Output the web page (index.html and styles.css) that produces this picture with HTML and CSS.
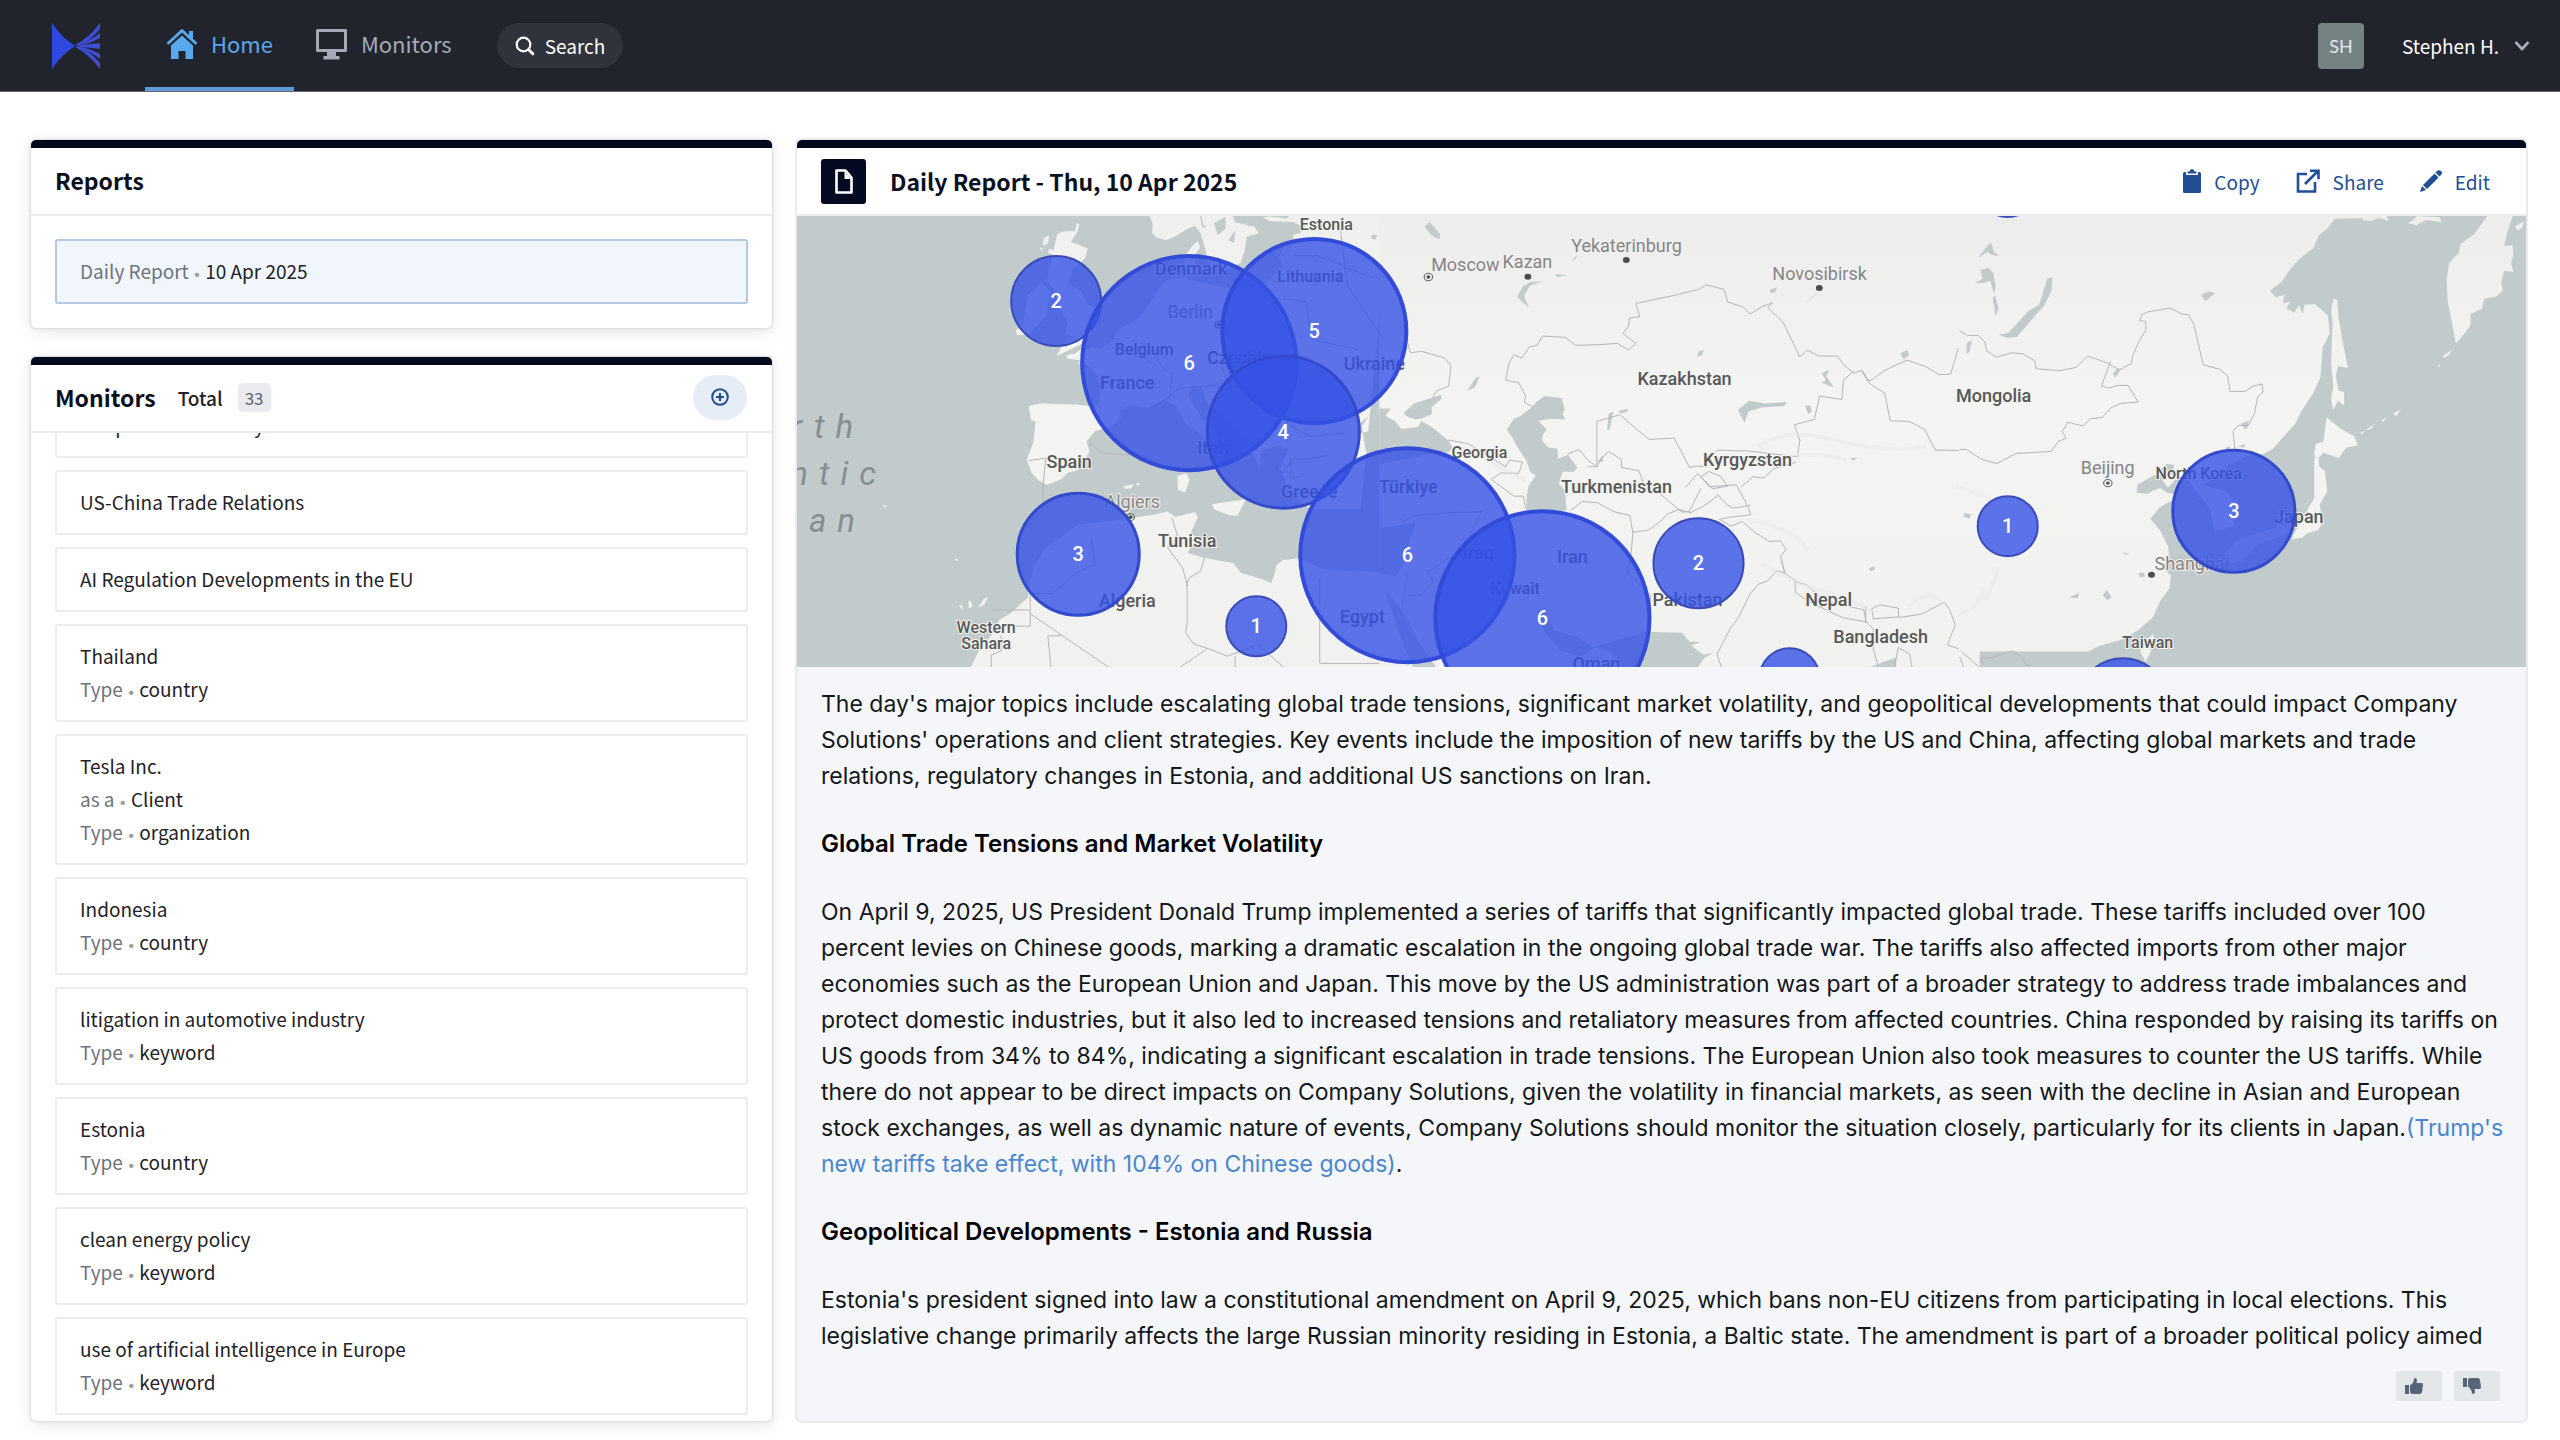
FILE: index.html
```html
<!DOCTYPE html>
<html lang="en">
<head>
<meta charset="utf-8">
<meta name="viewport" content="width=device-width, initial-scale=1">
<title>Daily Report - Thu, 10 Apr 2025</title>
<link rel="stylesheet" href="styles.css">
</head>
<body class="page">
<header class="topbar">
  <a class="logo" href="#" aria-label="Home page">
    <svg width="50" height="46" viewBox="0 0 50 46"><path fill="#2f49e3" d="M1 0Q10 14 24 23Q10 32 1 46z"/><g fill="#3d4fd8"><path d="M24 22Q38 15 49 0v6Q38 19 27 22.500z"/><path d="M27 22.500Q40 17 49 10v5Q38 21 28 22.500z"/><path d="M27 22.500L49 20v6L27 23.500z"/><path d="M28 23.500Q38 25 49 31v5Q40 29 27 23.500z"/><path d="M27 23.500Q38 27 49 40v6Q38 31 24 24z"/></g></svg>
  </a>
  <nav class="nav">
    <a class="tab tab-active" href="#"><svg width="30" height="32" viewBox="0 0 30 32"><path fill="none" stroke="currentColor" stroke-width="3" stroke-linecap="round" stroke-linejoin="round" d="M1.500 15L15 2.500 28.500 15"/><path fill="currentColor" d="M22 3h4v9l-4-4zM15 7.500L26 17.500V31h-7.500v-8h-7v8H4V17.500z"/></svg>Home</a>
    <a class="tab" href="#"><svg width="31" height="32" viewBox="0 0 31 32"><path fill="none" stroke="currentColor" stroke-width="3" stroke-linejoin="round" d="M1.500 2.500h28v20h-28z"/><path fill="currentColor" d="M11 23h9v5h3.500v3.500h-16V28H11z"/></svg>Monitors</a>
  </nav>
  <button class="search" type="button"><svg width="20" height="20" viewBox="0 0 20 20"><circle cx="8.500" cy="8.500" r="6.800" fill="none" stroke="currentColor" stroke-width="2.200"/><path stroke="currentColor" stroke-width="3" stroke-linecap="round" d="M14 14l3.800 3.800"/></svg>Search</button>
  <span class="avatar">SH</span>
  <button class="user" type="button">Stephen H.<svg width="16" height="12" viewBox="0 0 16 12"><path fill="none" stroke="#a9aebb" stroke-width="2.600" d="M1.500 2L8 9l6.500-7"/></svg></button>
</header>
<main class="layout">
  <div class="side">
    <section class="card">
      <div class="card-head"><h2 class="card-title">Reports</h2></div>
      <div class="reports"><a class="item item-selected" href="#"><span class="line"><span class="key">Daily Report</span> <span class="dot">•</span> 10 Apr 2025</span></a></div>
    </section>
    <section class="card monitors">
      <div class="card-head"><h2 class="card-title">Monitors</h2><span class="total">Total</span><span class="badge">33</span>
        <button class="add" type="button" aria-label="Add monitor"><svg width="20" height="20" viewBox="0 0 20 20"><circle cx="10" cy="10" r="7.800" fill="none" stroke="currentColor" stroke-width="2"/><path stroke="currentColor" stroke-width="2.200" d="M10 6v8M6 10h8"/></svg></button></div>
      <div class="list">
        <a class="item" href="#"><span class="line">Geopolitical Stability in Rwanda</span></a>
        <a class="item" href="#"><span class="line">US-China Trade Relations</span></a>
        <a class="item" href="#"><span class="line">AI Regulation Developments in the EU</span></a>
        <a class="item" href="#"><span class="line">Thailand</span><span class="line"><span class="key">Type</span> <span class="dot">•</span> country</span></a>
        <a class="item" href="#"><span class="line">Tesla Inc.</span><span class="line"><span class="key">as a</span> <span class="dot">•</span> Client</span><span class="line"><span class="key">Type</span> <span class="dot">•</span> organization</span></a>
        <a class="item" href="#"><span class="line">Indonesia</span><span class="line"><span class="key">Type</span> <span class="dot">•</span> country</span></a>
        <a class="item" href="#"><span class="line">litigation in automotive industry</span><span class="line"><span class="key">Type</span> <span class="dot">•</span> keyword</span></a>
        <a class="item" href="#"><span class="line">Estonia</span><span class="line"><span class="key">Type</span> <span class="dot">•</span> country</span></a>
        <a class="item" href="#"><span class="line">clean energy policy</span><span class="line"><span class="key">Type</span> <span class="dot">•</span> keyword</span></a>
        <a class="item" href="#"><span class="line">use of artificial intelligence in Europe</span><span class="line"><span class="key">Type</span> <span class="dot">•</span> keyword</span></a>
      </div>
    </section>
  </div>
  <section class="card report">
    <div class="card-head report-head">
      <span class="doc"><svg width="18" height="25" viewBox="0 0 18 25"><path fill="none" stroke="#fff" stroke-width="2.600" stroke-linejoin="round" d="M1.500 1.500h9l6 7v15h-15z"/><path fill="#fff" d="M9.500 2v8H16z"/></svg></span>
      <h1 class="card-title">Daily Report - Thu, 10 Apr 2025</h1>
      <div class="actions">
        <button class="action" type="button"><svg width="18" height="24" viewBox="0 0 18 24"><path fill="currentColor" d="M0 4.500Q0 3 1.500 3H3v3h12V3h1.500Q18 3 18 4.500v18Q18 24 16.500 24h-15Q0 24 0 22.500zM4.500 4.500V2.500H6.500Q7 0 9 0t2.500 2.500h2v2z"/></svg>Copy</button>
        <button class="action" type="button"><svg width="24" height="24" viewBox="0 0 24 24"><path fill="none" stroke="currentColor" stroke-width="2.600" d="M11 5H2v17.500h17V13M9 15L21 3M14 1.800h8.500v8.500"/></svg>Share</button>
        <button class="action" type="button"><svg width="22" height="22" viewBox="0 0 22 22"><path fill="currentColor" d="M0 22l2-6 4 4zM3 15L14.500 3.500l4 4L7 19zM15.500 2.500L17 1q2-1.500 4 0t0 4l-1.500 1.500z"/></svg>Edit</button>
      </div>
    </div>
    <svg class="map" viewBox="798 216 1728 451" role="img" aria-label="Map of events by country">
      <defs><linearGradient id="land" gradientUnits="userSpaceOnUse" x1="0" y1="48" x2="0" y2="1500"><stop offset="0" stop-color="#ededed"/><stop offset=".4" stop-color="#f4f4f2"/><stop offset="1" stop-color="#f1f1f0"/></linearGradient></defs>
      <rect x="798" y="216" width="1728" height="451" fill="#c2cbcc"/>
      <!-- Europe and North Africa -->
      <g class="tile" transform="translate(790 130) scale(.3827 .3444)">
        <g fill="url(#land)">
          <path d="M941 245l9 30-2 25 12 12 25 8 25-12 25-18 25-12 15 22 10 38 10 48 25 20 38-6 22-15 10-35 5-40 32-10-12-20-50-12-8-23z"/>
          <path d="M1568 245H1310l-10 12-48-6-14 4 20 10 60 2 22 14-4 18-20 6 4 20-28 14-12 30 8 28-18 22-30 26-60 16-54-6-44-12-44-10-8-30 2-34 24-36 12-10 6 18-16 24 6 40-28 22-52 8-30 46-38 62-24 20-30 14-18 36-34 22-18-4-8 6-18-3-18 14-24 6 4 10 34 4-8 10 26 4 26 32 8 38-4 42-16 8-44-5-60-2-30-2-34 9 6 40 12 4-6 60-17 50 12 38 18 22 22 14 38-16 18-20 24-6 32-54-8-30 22-30 44-14 24-26-4-18 26-16 48 6 40-22 34 16 24 52 40 30 34 44 22 40 4-30-14-60-44-40-34-64 10-32 24 6 14 46 46 50 48 46 20 38 22 50 12 22-10-22 6-46 42-14 28 12-14 30-8 24 14 40 20 42 44 36h132z"/>
          <path d="M1568 1285l-168-10-70-32-40 6-18 14-2 18-10 34-20-10-60-20-20-28-75-15-45-15 25-38-15-22 18-44-8-14-52 14-20-16-30 8-80 14-80 10-44 6-40 34-40 30-36 56-14 92-46 46-28 18-22 46-28 36-20 44-22 52h1130z"/>
          <path d="M700 303l14-8 40-2-18 32 44 18-6 28-14 16-20 18-10 40 36 26 12 34 26 10-2 34-20 26 6 14-28 34-62 34 20-40 34-16-30-6 6-34-10-20-16-30-8-44-20-30z"/>
          <path d="M624 480l36-38 22 26-8 70-46 54-32 4-4-14 20-20z"/>
          <path d="M665 315l14-10-2 22-14 10zM752 270l6 4-4 20-8 4zM656 340l6 4-2 10zM680 345l12 4-4 12-12-4zM1014 1004l24-8 8 20-12 36-18-8zM1105 1086l88-14-22 48-22-2-40-18zM874 1034l26-6-6 12-16 2zM905 1024l12 2-4 8zM243 1088l14 4-6 4zM444 1378l8 2 2 12-6-4zM468 1368l8 0 2 16-8 4zM498 1380l10-18 12-8-8 20-14 12zM434 1243l8 4-6 4z"/>
        </g>
        <path class="water" d="M1490 850q30-20 78-80v90l-76 20zM1110 270l30-18v34l-20 20zM1148 320l18-32-4 40zM1522 304l14 0-4 14-12-2zM1568 810l-48 10-24 40 10 70 62-10zM1180 250l20 30 30-22z"/>
        <path class="border" d="M626 960l45-8-8 80 2 44M785 910l36 28 70 6M1075 250l6 30 8 0M1320 365l60 0 70 30 10 60 90 150M1290 490l60 8 16 110 120 30M1440 290l12 110 80 30 36-10M935 620l40 70 26 20-6 60-20 40M960 800l60-50 100-10 30-36M900 640l50 40M1130 690l20 50 120 30 30 80 60 40 90-10M1000 1125l18 66M1018 1191l-30 20 40 60 12 50 0 110-4 28 20 32 38 14 50 22 50-20 30-14 68 66M1085 1240l-10 40-30 20-8 24M630 1345h60l60-60 50-24-12-80M630 1345v95h-40M530 1393h100M630 1404l206 156M710 1468h-34l8 92M554 1466v46l-26 12v36M1020 1560l72-54M1165 1526v34M1386 1300v248h180M1300 925l-30 60 20 10 26-40 40 0 50-10M1310 950l0 60 22-4"/>
        <circle class="ring" cx="892" cy="1124" r="10"/><circle class="pin" cx="892" cy="1124" r="5"/>
        <circle class="ring" cx="1122" cy="565" r="10"/><circle class="pin" cx="1122" cy="565" r="5"/>
      </g>
      <!-- Central Asia -->
      <g class="tile" transform="translate(1380 200) scale(.3827 .3333)">
        <path fill="url(#land)" d="M0 40H1568V1410H0z"/>
        <g class="water">
          <path d="M0 625l30 0-14 22 24 16 18 24 42-6 10-18 30 20 40 38 12 22-12 14-30 0-150 36z"/>
          <path d="M64 638l26-28 72-26 0 12-26 26 2 20-30 14-14 2-24-10z"/>
          <path d="M400 620l10-14 22-18 44 6 8 34-6 14 8 16-36-2-35 6 22 26-10 16-2 18 16 20 24 4 2 30 26-12 24 38-10 14-28-2-10 36 16 22 4 60H384l0-36 6-40 18-28-14-14-10-32-22-38-14-30-15-26 18-32 18-8z"/>
          <path d="M700 1295l90 3 20 26 30 2-26 10 32 28 26-6-24 16-18 30H640l-40-52-40-10-30 28-60-20-40-60-20-60 20 10 30 52 60 20 34 30z"/>
          <path d="M15 1170l45 60 40 90 50 85H90l-30-80zM0 985l95-18-12 40-22 90-18 32-43-10z"/>
          <path d="M936 630l30-28 40 8 58-4-6 12-60 4-34 12-10 34zM118 80l14-14 26 36 0 16-22-12zM360 290l14-30 20-14 32-2-34 14-14 30 12 34-20-20zM230 572l20-36 12-8-12 34zM595 690l4-50 12-6-10 56zM626 632l24-6-4 10-18 4zM1155 520l20-12-8 20 20 34-32-14 12-8zM830 470l4-16 14-4-6 16zM1020 270l18-8-4 14-12 4zM1112 618l14-2 2 20-8 6zM1360 460l18-10 6 14-14 14zM1540 420l12-6-4 40-8-10zM1528 940l20 6-6 14-14-6zM1278 1104l14-6 2 10-10 6zM570 785l14-20 0 20zM1230 774l18 0-10 8zM460 222l30 4-26 6zM500 186l16-20-4 12zM1280 1402l30-14 40-16v30zM1114 308l34-32-22 18z"/>
        </g>
        <path class="border" d="M75 430l6 28 30-4 60 20 16 24-6 60-30 14-12 20M400 620l-22-14 4-18-18-40-34-8 8-50 14-26 20 10 20-34 20-4 14-28 60 4 26 24 60-2 50-4 28 20 20-20-34-30 14-20 4-26 26-4-10-40 100-24 64-18 20-14 46 14 10 38 42 16 16 20 34-24 26-10-14 14 40 44 44 104 20-20 30 18 48 0 20 30 24 22 20-10 18 32 10-4 30-26 60-32 50 20 34 24 30-2 20-78 60 20M1240 512l-28 28-4 58-58-10-14 70-52 16 14 46-6 50-30-4-104-14-30 0-44-2-20 20-10 30-24-2-20 4-40-88-66 4-76-74-60 20v136l-24-20-22-32-30 14M544 800l24 0 10-20 20-26 34 24 0 24 46 10 14 44 40 24 58 56 0 0 20-2 30-70M500 930l30-26 40 4 40 26 44 12 8 50-4 60-10 60 60 70 0 60M662 996l40-6 30-24 20-24 30-14 30 10 34-20 30-24 8-10 24 30 16 10 46-8M800 862l14-20 18-22 30 40 70-6 10 20 22 50 6 20-60 8-22 6 30 20 30-14 30 30 40 30 30-2 14 26-14 20 10 50-20-6-24 30-24 10-22 30-30 70-20 30-36 80 20 70-44 12M840 830l20-16 30 14 20 30-40 8zM945 860l30-30 30 4 24-28 60-20M1085 1145l30 8 50 50 100 26 6 36-60-12-74-40-30-20-20-16zM1050 1080l10 40 30 25M1260 514l20 36 40 30 14 82 50 2 40 24 28 62 116 2M1270 1218v50M1270 1262l20 24 0 60 12 50M1286 1226l20-12 50 10 0 26-66 6zM1356 1252l60-10 60-36 14 24 14 44-20 60 28 12 60 60M1345 1402l10-60 30 20 6 40M180 720l50 10 60 40 40 30 10-20 34 6-10 34-46-2-26 20 60 50 24 0 6 36M60 1210l14-90M74 1185l36 0 30-40-14-30 80-60 40-70 20-50-80 2-90 10-40 20"/>
        <g class="relief"><path d="M990 740q60-60 200-20t240 20M1000 800q100-60 220-20M960 960q120 20 160 90M1000 1090q80 60 150 80t150 70M1380 1220q60-60 90-10M240 740q60 60 140 100"/></g>
        <circle class="ring" cx="128" cy="231" r="11"/><circle class="pin" cx="128" cy="231" r="5"/><circle class="pin" cx="388" cy="230" r="9"/><circle class="pin" cx="645" cy="180" r="9"/><circle class="pin" cx="1149" cy="264" r="9"/>
      </g>
      <!-- East Asia and Pacific -->
      <g class="tile" transform="translate(1960 200) scale(.3827 .3333)">
        <g fill="url(#land)">
          <path d="M-2 40H1066l-8 14-78 2-20 30-22 20-14 38-34 30-26 32-24 40-30 26 16 20 22-8-4 26 20-4-12 18 22 14 12-22 10 24 4-26 28-2 34 34 4 54-18 42-6 90-20 50-30 52-14 34-26 34-36 46-24 14-40 4-50 30-44 44-22 14 60 20 30 46-10 56-50 20-12-70-32-48-20-32-30-18-28 34-14-20 26-20 4-28-20-2-30 32-46 30-2 24 28 4 14-10 20-8 18 14 24 6-4 12-40 26-24 34 26 36 20 46 4 36-20 28 24 24-4 38-24 38-20 50-40 40-40 26-62 20-26 16H-2z"/>
          <path d="M976 296l10 4 4 54 10 70 14 80-26-6-6 30 8 44 14 4 0 40-16-14-12 26-6-30 6-40-6-70 4-120-4-34zM958 652l40 36 32 20 10 28-30 6-20 32-40-16-18 22-6-20 4-28 20-8zM926 778l8-14 4 14 0 20 16 16 6 60-20 40 10 50-14 26-30 10-10 12-30 6 20-44 20-40 20-40 0-44zM1378 48h66l-14 50-8 40 22-2 2 30-6 24 6 26-24-4-8 34 4 26-18 18-30 6-6 30-30 16 0 34-20 30-18 24-10-60-12-70-2-60 6-50 26-32 4-26 36-30zM1050 48h66l4 14-26-8-20 10-20-4zM1170 70l14-10 10-12 60 4 4 14-40-6-24 16zM1450 80l24-16-4 16-12 12zM474 1330l34-30-8 50-14 36-14-30zM1262 468l24-20-10 18-12 8zM1132 640l20-12-12 20zM1060 690l26-20-14 18zM1100 662l18-12-12 14zM1044 700l14-8-6 10zM1180 596l10-2zM1250 496l4-6-2 14z"/>
          <path opacity=".8" d="M690 1060l40-44 60-20 50-24 30 4-30 34-60 20-40 50-30 10z"/>
        </g>
        <path class="water" d="M228 236l14-4-2 40-20 46-24 30-46 62-26 4-22-10 26-6 50-64 30-20zM630 286l20-12 18 6-14 12-12 12zM400 520l14-16 4 10-12 18zM735 670l20-8-2 18-8 8zM18 430l14-10-6 34-8 8zM48 174l24-36 10-12 6 26 14 16-20-4-10-8zM40 250l20-14-6-26 20-6 14 14 6 44-4 20-10-40-16 6zM86 294l6-8 10 38-8 24zM10 938l20 4-4 14-14-6zM374 1186l10-18 12 24-10 8zM424 1056l18 4-8 4zM286 1192l26-14-4 16zM466 1120l14-4 4 12-12 4zM690 745l16-8 0 12zM725 740l20-8 0 10z"/>
        <path class="border" d="M0 392l20 14 28 0 18 20 4 26 26 20 40-14 30 4 30 20 4 24 60 6 44-10 30-34 50 20 34 22 30-20 6-30 16-40 16-30 0-26-16-2 6-18 14-8 60-12 30 18 18 2 14 30 14 70 10 50 44 14 20 20 6 46 40 0 20-16 24-6 2 24-14 14-8 50-16 36-26 0-14 18 6 66M394 484l-24 74 20 6 22-8 28 0 26 50-46 4-26 14-22 28-30 4-20 22-40-12-14 28 10 20-20 10-20 30-90 6-50 30-40-12-40-30H0M0 1370l10 30M60 1390l-6-14 30-4 30-12 24-8 24 18 10 22 20 10M600 915l30-14"/>
        <g class="relief"><path d="M-10 860q80 20 100 60M100 1100q-10 60-40 100M0 1240q60-20 60-80"/></g>
        <circle class="ring" cx="387" cy="849" r="11"/><circle class="pin" cx="387" cy="849" r="5"/><circle class="pin" cx="501" cy="1124" r="9"/>
      </g>
      <g class="ocean"><text x="865" y="438">North</text><text x="888" y="485">Atlantic</text><text x="867" y="532">Ocean</text></g>
      <g class="country">
        <text x="1192" y="275">Denmark</text><text x="1128" y="389">France</text><text x="1070" y="468">Spain</text><text x="1188" y="547">Tunisia</text><text x="1128" y="607">Algeria</text><text x="1375" y="370">Ukraine</text><text x="1215" y="454">Italy</text><text x="1310" y="498">Greece</text><text x="1363" y="623">Egypt</text><text x="1409" y="493">Türkiye</text><text x="1685" y="385">Kazakhstan</text><text x="1748" y="466">Kyrgyzstan</text><text x="1617" y="493">Turkmenistan</text><text x="1573" y="563">Iran</text><text x="1479" y="559">Iraq</text><text x="1688" y="606">Pakistan</text><text x="1829" y="606">Nepal</text><text x="1881" y="643">Bangladesh</text><text x="1597" y="670">Oman</text><text x="1994" y="402">Mongolia</text><text x="2299" y="523">Japan</text><text x="1240" y="364">Czechia</text>
      </g>
      <g class="country minor">
        <text x="1327" y="230">Estonia</text><text x="1311" y="282">Lithuania</text><text x="1145" y="355">Belgium</text><text x="987" y="633">Western</text><text x="987" y="649">Sahara</text><text x="1480" y="458">Georgia</text><text x="1516" y="594">Kuwait</text><text x="2199" y="479">North Korea</text><text x="2148" y="648">Taiwan</text>
      </g>
      <g class="city">
        <text x="1191" y="318">Berlin</text><text x="1133" y="508">Algiers</text><text x="1466" y="271">Moscow</text><text x="1528" y="268">Kazan</text><text x="1627" y="252">Yekaterinburg</text><text x="1820" y="280">Novosibirsk</text><text x="2108" y="474">Beijing</text><text x="2192" y="570">Shanghai</text>
      </g>
      <g class="bubbles">
        <circle class="s" cx="1057" cy="301" r="45"/><circle class="l" cx="1190" cy="363" r="107"/><circle class="l" cx="1315" cy="331" r="92"/><circle class="m" cx="1284" cy="432" r="76"/><circle class="m" cx="1079" cy="554" r="61"/><circle class="s" cx="1257" cy="626" r="30"/><circle class="l" cx="1408" cy="555" r="107"/><circle class="l" cx="1543" cy="618" r="107"/><circle class="s" cx="1699" cy="563" r="45"/><circle class="s" cx="1790" cy="678" r="30"/><circle class="s" cx="2008" cy="526" r="30"/><circle class="m" cx="2234" cy="511" r="61"/><circle class="s" cx="2123" cy="703" r="45"/><circle class="s" cx="2008" cy="187" r="30"/>
      </g>
      <g class="count">
        <text x="1057" y="308">2</text><text x="1190" y="370">6</text><text x="1315" y="338">5</text><text x="1284" y="439">4</text><text x="1079" y="561">3</text><text x="1257" y="633">1</text><text x="1408" y="562">6</text><text x="1543" y="625">6</text><text x="1699" y="570">2</text><text x="2008" y="533">1</text><text x="2234" y="518">3</text>
      </g>
    </svg>
    <div class="text">
      <p>The day's major topics include escalating global trade tensions, significant market volatility, and geopolitical developments that could impact Company Solutions' operations and client strategies. Key events include the imposition of new tariffs by the US and China, affecting global markets and trade relations, regulatory changes in Estonia, and additional US sanctions on Iran.</p>
      <h3>Global Trade Tensions and Market Volatility</h3>
      <p>On April 9, 2025, US President Donald Trump implemented a series of tariffs that significantly impacted global trade. These tariffs included over 100 percent levies on Chinese goods, marking a dramatic escalation in the ongoing global trade war. The tariffs also affected imports from other major economies such as the European Union and Japan. This move by the US administration was part of a broader strategy to address trade imbalances and protect domestic industries, but it also led to increased tensions and retaliatory measures from affected countries. China responded by raising its tariffs on US goods from 34% to 84%, indicating a significant escalation in trade tensions. The European Union also took measures to counter the US tariffs. While there do not appear to be direct impacts on Company Solutions, given the volatility in financial markets, as seen with the decline in Asian and European stock exchanges, as well as dynamic nature of events, Company Solutions should monitor the situation closely, particularly for its clients in Japan.<a href="#">(Trump's new tariffs take effect, with 104% on Chinese goods)</a>.</p>
      <h3>Geopolitical Developments - Estonia and Russia</h3>
      <p>Estonia's president signed into law a constitutional amendment on April 9, 2025, which bans non-EU citizens from participating in local elections. This legislative change primarily affects the large Russian minority residing in Estonia, a Baltic state. The amendment is part of a broader political policy aimed</p>
    </div>
    <div class="feedback">
      <button class="thumb" type="button" aria-label="Helpful"><svg width="18" height="16" viewBox="0 0 18 16"><path fill="currentColor" d="M0 7h4v9H0zM5 7.500Q8.500 5 9 1q.2-1 1.300-1 2 .3 1.700 3L11.500 5H16.500Q18 5.200 18 7l-1 7q-.4 2-2.500 2H8.500Q6.500 16 5 15z"/></svg></button>
      <button class="thumb" type="button" aria-label="Not helpful"><svg width="18" height="16" viewBox="0 0 18 16"><path fill="currentColor" d="M0 9h4V0H0zM5 8.500Q8.500 11 9 15q.2 1 1.300 1 2-.3 1.700-3L11.500 11H16.500Q18 10.800 18 9l-1-7q-.4-2-2.500-2H8.500Q6.500 0 5 1z"/></svg></button>
    </div>
  </section>
</main>
</body>
</html>
```
FILE: styles.css
```css
* { box-sizing: border-box; }
.page {
  margin: 0;
  height: 100vh;
  display: flex;
  flex-direction: column;
  background: #fff;
  color: #1f2226;
  font: 19px/33px "Noto Sans CJK SC", "Noto Sans", sans-serif;
}
button { font: inherit; border: 0; padding: 0; background: none; cursor: pointer; }
a { color: inherit; text-decoration: none; }
svg { display: block; flex: none; }
h1, h2, h3, p { margin: 0; }

.topbar {
  flex: none;
  display: flex;
  align-items: center;
  height: 92px;
  padding: 0 30px 0 51px;
  background: #21242d;
  border-bottom: 1px solid #6a6b70;
  color: #fff;
}
.logo { margin-right: 44px; }
.nav { display: flex; align-self: stretch; }
.tab {
  display: flex;
  align-items: center;
  gap: 14px;
  padding: 0 21px 0 22px;
  border-bottom: 4px solid transparent;
  color: #a6a9b6;
  font-size: 22px;
}
.tab-active { color: #58a9ee; border-color: #5d9ad6; }
.search {
  display: flex;
  align-items: center;
  gap: 10px;
  height: 45px;
  margin-left: 24px;
  padding: 0 18px;
  border-radius: 23px;
  background: #30333c;
  color: #fff;
}
.avatar {
  margin-left: auto;
  width: 46px;
  border-radius: 4px;
  background: #748284;
  color: #e4e9e9;
  text-align: center;
  font: 18px/46px Lato, sans-serif;
}
.user { display: flex; align-items: center; gap: 15px; margin-left: 38px; color: #fff; }

.layout {
  flex: 1;
  min-height: 0;
  display: grid;
  grid-template-columns: minmax(0, 3fr) minmax(0, 7fr);
  gap: 25px;
  padding: 48px 34px 19px 31px;
}
.side { display: flex; flex-direction: column; gap: 29px; min-height: 0; }
.card {
  display: flex;
  flex-direction: column;
  background: #fff;
  border-top: 8px solid #030a1e;
  border-radius: 5px;
  box-shadow: 0 0 2px 1px #d9dadc, 0 4px 16px rgba(0, 0, 0, .1);
}
.card-head {
  flex: none;
  display: flex;
  align-items: center;
  height: 68px;
  padding: 0 25px 2px 24px;
  border-bottom: 2px solid #ececee;
}
.card-title { color: #0b1020; font-size: 23px; font-weight: 700; }
.reports { padding: 23px 24px 24px; }
.monitors { flex: 1; min-height: 0; }
.total { margin-left: 22px; font-weight: 500; }
.badge {
  margin-left: 15px;
  padding: 0 7px;
  border-radius: 5px;
  background: #e9ebef;
  color: #5c6370;
  font-size: 17px;
  line-height: 29px;
}
.add {
  display: flex;
  align-items: center;
  justify-content: center;
  width: 54px;
  height: 45px;
  margin-left: auto;
  border-radius: 23px;
  background: #e6edf6;
  color: #1f4f86;
}
.list {
  flex: 1;
  min-height: 0;
  display: flex;
  flex-direction: column;
  justify-content: flex-end;
  gap: 12px;
  padding: 0 24px 6px;
  overflow: hidden;
}
.item {
  flex: none;
  display: block;
  padding: 13px 23px 15px;
  border: 2px solid #ececed;
  border-radius: 3px;
}
.item-selected { background: #f1f5fc; border-color: #b5c9e1; }
.line { display: block; height: 33px; }
.key { color: #6e747c; }
.dot { color: #9a9da2; font-family: Inter, sans-serif; font-size: 14px; line-height: 14px; }

.report { background: #f4f6f9; box-shadow: 0 0 0 2px #e9eaed; min-height: 0; }
.report-head { background: #fff; padding: 0 36px 0 24px; }
.doc {
  display: flex;
  align-items: center;
  justify-content: center;
  width: 45px;
  height: 45px;
  margin-right: 24px;
  border-radius: 3px;
  background: #030a22;
}
.actions { display: flex; gap: 36px; margin-left: auto; }
.action { display: flex; align-items: center; gap: 13px; color: #204f96; }

.map { width: 100%; height: auto; }
.tile path { vector-effect: non-scaling-stroke; }
.water { fill: #c2cbcc; }
.border { fill: none; stroke: #b4b6b8; stroke-width: 1px; stroke-linejoin: round; }
.relief path { fill: none; stroke: #e6e7e7; stroke-width: 4px; opacity: .4; }
.ring { fill: none; stroke: #666; stroke-width: 3px; }
.pin { fill: #4d4d4d; }
.map text { text-anchor: middle; font-family: Roboto, sans-serif; }
.country text { font-size: 18px; fill: #585858; font-weight: 500; paint-order: stroke; stroke: #f4f4f2; stroke-width: 2px; }
.country.minor text { font-size: 16px; }
.city text { font-size: 18px; fill: #858585; paint-order: stroke; stroke: #f1f1f0; stroke-width: 2px; }
.map .ocean text { text-anchor: end; font-size: 33px; font-style: italic; letter-spacing: 11px; fill: #858e90; }
.bubbles circle { fill: #3551e6; fill-opacity: .8; }
.bubbles .s { stroke: #3a4cba; stroke-width: 2px; }
.bubbles .m { stroke: #334acb; stroke-width: 3px; }
.bubbles .l { stroke: #324bd8; stroke-width: 4px; }
.map .count text { font-size: 20px; font-weight: 500; fill: #fff; }

.text {
  flex: 1;
  min-height: 0;
  padding: 19px 20px 0 24px;
  overflow: hidden;
  color: #14171a;
  font: 23px/36px Inter, "Liberation Sans", sans-serif;
}
.text h3 { margin: 32px 0; color: #000; font-size: 24px; line-height: 36px; font-weight: 600; }
.text a { color: #4a87cf; }
.feedback { flex: none; display: flex; justify-content: flex-end; gap: 12px; padding: 12px 26px 20px; }
.thumb {
  display: flex;
  align-items: center;
  width: 46px;
  height: 30px;
  padding: 0 9px;
  border-radius: 2px;
  background: #e4e7ea;
  color: #56647a;
}
```
